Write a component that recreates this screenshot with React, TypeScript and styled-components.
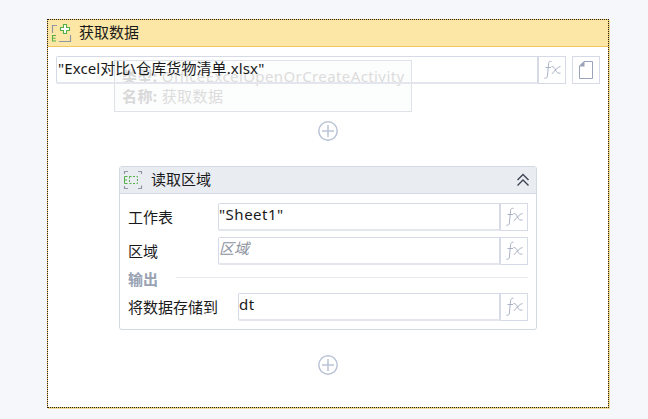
import React from 'react';
import styled, { createGlobalStyle } from 'styled-components';

const FONT = '"Noto Sans", "Noto Sans CJK SC", sans-serif';

const GlobalStyle = createGlobalStyle`
  html, body {
    margin: 0;
    padding: 0;
    background: #f5f7fb;
    font-family: ${FONT};
    overflow: hidden;
  }
`;

const FxIcon = () => (
  <svg width="20" height="20" viewBox="0 0 20 20" fill="none" stroke="#a9b2c4" strokeWidth="1">
    <path d="M9.5 1.5C8 .8 6.8 1.6 6.6 3.5L5.4 16C5.2 18 4 18.8 2.3 18" />
    <path d="M3.5 7.5H9" />
    <path d="M9.5 6.5C11.5 6.5 12.5 7.5 13.5 10C14.5 12.5 16 13.6 18.5 13" />
    <path d="M18.5 6.5C15.5 7 13 10.5 10 13.8" />
  </svg>
);

const PlusIcon = () => (
  <svg width="22" height="22" viewBox="0 0 22 22" fill="none" stroke="#bcc5d6" strokeWidth="1.5">
    <circle cx="11" cy="11" r="9.2" />
    <path d="M11 5V17M5 11H17" />
  </svg>
);

const App = () => {
  return (
    <Page>
      <GlobalStyle />
      <Outer>
        <OuterHeader>
          <svg width="22" height="22" viewBox="0 0 22 22" fill="none">
            <path d="M2.5 11V3.5H7M20.5 13V19.5H9" stroke="#8f97a3" strokeWidth="1.2" />
            <path d="M13.5 2.5H16.5V5.5H19.5V8.5H16.5V11.5H13.5V8.5H10.5V5.5H13.5Z" stroke="#55b04a" strokeWidth="1.1" fill="#fff" />
            <path d="M6 13.5H2.5V19H6M2.5 16.2H5.5" stroke="#55b04a" strokeWidth="1.1" />
          </svg>
          <HeaderTitle>获取数据</HeaderTitle>
        </OuterHeader>

        <OuterBody>
          <TopRow>
            <TopInput>"Excel对比\仓库货物清单.xlsx"</TopInput>
            <FxButton><FxIcon /></FxButton>
            <DocButton>
              <svg width="16" height="20" viewBox="0 0 16 20" fill="none">
                <path d="M6 1.5H14.5V18.5H1.5V6Z" stroke="#98a2b8" strokeWidth="1" fill="#fff" />
                <path d="M6.5 1V6.5H1Z" fill="#98a2b8" />
              </svg>
            </DocButton>
          </TopRow>

          <Tip>
            <TipLine><b>类型:</b> OfficeExcelOpenOrCreateActivity</TipLine>
            <TipLine><b>名称:</b> 获取数据</TipLine>
          </Tip>

          <AddSlot $top={36}><PlusIcon /></AddSlot>

          <Card>
            <CardHeader>
              <svg width="20" height="20" viewBox="0 0 20 20" fill="none">
                <path d="M1.5 4V1.5H5M15 1.5H18.5V4M18.5 15.5V18.5H15M5 18.5H1.5V16" stroke="#8f97a3" strokeWidth="1.2" />
                <rect x="6.5" y="6.5" width="8" height="7" stroke="#55b04a" strokeWidth="1" strokeDasharray="2 1.5" />
                <path d="M4.5 6.5H1.5V13.5H4.5M1.5 10H4" stroke="#55b04a" strokeWidth="1" />
              </svg>
              <CardTitle>读取区域</CardTitle>
              <Collapse>
                <svg width="14" height="14" viewBox="0 0 14 14" fill="none" stroke="#3c4454" strokeWidth="1.4">
                  <path d="M1.5 7L7 1.5L12.5 7" />
                  <path d="M1.5 12.5L7 7L12.5 12.5" />
                </svg>
              </Collapse>
            </CardHeader>
            <CardBody>
              <Row>
                <Label>工作表</Label>
                <Field>"Sheet1"</Field>
                <FxButton><FxIcon /></FxButton>
              </Row>
              <Row>
                <Label>区域</Label>
                <Field $placeholder>区域</Field>
                <FxButton><FxIcon /></FxButton>
              </Row>
              <Divider>
                <DividerLabel>输出</DividerLabel>
                <DividerLine />
              </Divider>
              <Row>
                <Label $wide>将数据存储到</Label>
                <Field>dt</Field>
                <FxButton><FxIcon /></FxButton>
              </Row>
            </CardBody>
          </Card>

          <AddSlot $top={24}><PlusIcon /></AddSlot>
        </OuterBody>
      </Outer>
    </Page>
  );
};

export default App;

const Page = styled.div`
  width: 648px;
  height: 419px;
  padding: 19px 39px 11px 47px;
  box-sizing: border-box;
  background: #f5f7fb;
`;

const Outer = styled.div`
  position: relative;
  height: 389px;
  box-sizing: border-box;
  background: #f0c75e;
  border: 1px dotted #222;
  box-shadow: 1px 1px 0 0 rgba(240, 199, 94, 0.6);
  display: flex;
  flex-direction: column;
`;

const OuterHeader = styled.div`
  height: 27px;
  flex: none;
  box-sizing: border-box;
  background: #fde7a6;
  border-bottom: 1px solid #f2c763;
  display: flex;
  align-items: center;
  gap: 7px;
  padding: 0 0 0 2px;
`;

const HeaderTitle = styled.span`
  font-size: 15px;
  line-height: 22px;
  padding-bottom: 2px;
  color: #1a1a1a;
`;

const OuterBody = styled.div`
  flex: 1;
  background: #fff;
  display: flex;
  flex-direction: column;
  align-items: center;
  padding: 9px 8px 0;
`;

const TopRow = styled.div`
  align-self: stretch;
  display: flex;
  height: 28px;
`;

const Field = styled.div<{ $placeholder?: boolean }>`
  flex: 1;
  min-width: 0;
  box-sizing: border-box;
  height: 28px;
  line-height: 20px;
  padding-left: 0;
  background: #fff;
  border: 1px solid #d5dae6;
  border-bottom: 2px solid #e3e6ed;
  border-radius: 2px 0 0 2px;
  font-size: 15px;
  letter-spacing: ${p => (p.$placeholder ? 0 : 0.5)}px;
  white-space: nowrap;
  color: ${p => (p.$placeholder ? '#8d93a0' : '#1a1a1a')};
  font-style: ${p => (p.$placeholder ? 'italic' : 'normal')};
`;

const TopInput = styled(Field)`
  position: relative;
  z-index: 1;
  background: transparent;
  padding-left: 1px;
  line-height: 22px;
  letter-spacing: 0.1px;
`;

const FxButton = styled.div`
  flex: none;
  width: 28px;
  height: 28px;
  box-sizing: border-box;
  border: 1px solid #d5dae6;
  background: #fff;
  display: flex;
  align-items: center;
  justify-content: center;
`;

const DocButton = styled(FxButton)`
  margin-left: 6px;
`;

const Tip = styled.div`
  position: absolute;
  left: 66px;
  top: 40px;
  width: 298px;
  height: 52px;
  box-sizing: border-box;
  padding: 5px 7px;
  border: 1px solid #dfe2e8;
  background: rgba(250, 251, 252, 0.5);
  color: #dcdcdc;
  font-size: 15px;
  letter-spacing: 0.4px;
`;

const TipLine = styled.div`
  height: 20px;
  line-height: 20px;
  white-space: nowrap;
  b { font-weight: 700; color: #d8d8d8; }
`;

const AddSlot = styled.div<{ $top: number }>`
  height: 22px;
  margin-top: ${p => p.$top}px;
  display: flex;
  position: relative;
`;

const Card = styled.div`
  width: 418px;
  height: 164px;
  margin-top: 24px;
  box-sizing: border-box;
  background: #fff;
  border: 1px solid #d3d8e3;
  border-radius: 3px;
`;

const CardHeader = styled.div`
  height: 27px;
  box-sizing: border-box;
  background: #e9ecf1;
  border-bottom: 1px solid #d3d8e3;
  display: flex;
  align-items: center;
  gap: 8px;
  padding: 0 6px 0 3px;
`;

const CardTitle = styled.span`
  flex: 1;
  font-size: 15px;
  line-height: 22px;
  padding-bottom: 2px;
  color: #1a1a1a;
`;

const Collapse = styled.span`
  display: flex;
`;

const CardBody = styled.div`
  display: flex;
  flex-direction: column;
  padding: 9px 8px 0;
  gap: 6px;
`;

const Row = styled.div`
  display: flex;
  height: 28px;
  align-items: center;
`;

const Label = styled.span<{ $wide?: boolean }>`
  flex: none;
  width: ${p => (p.$wide ? 110 : 90)}px;
  box-sizing: border-box;
  font-size: 15px;
  padding-bottom: 2px;
  color: #1a1a1a;
  white-space: nowrap;
`;

const Divider = styled.div`
  display: flex;
  align-items: center;
  height: 16px;
`;

const DividerLabel = styled.span`
  font-size: 15px;
  font-weight: 700;
  line-height: 16px;
  color: #98a2b3;
  width: 48px;
  flex: none;
`;

const DividerLine = styled.div`
  flex: 1;
  height: 1px;
  margin-top: -3px;
  background: #e8eaf0;
`;
